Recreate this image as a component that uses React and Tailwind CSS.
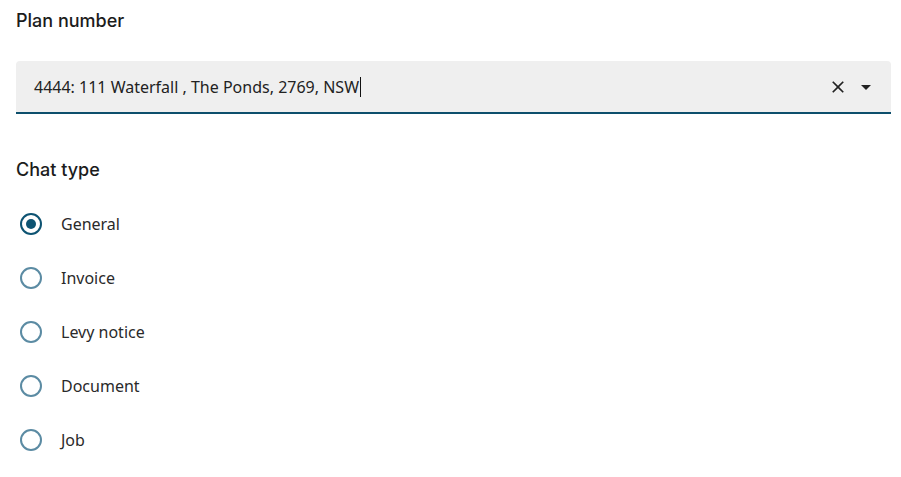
import React, { useState } from 'react';

const options = ['General', 'Invoice', 'Levy notice', 'Document', 'Job'];

const Radio = ({ checked }) => (
  <svg width="24" height="24" viewBox="0 0 24 24">
    <circle cx="12" cy="12" r="10" fill="none" stroke={checked ? '#0d5372' : '#5b8ba3'} strokeWidth="2" />
    {checked && <circle cx="12" cy="12" r="5" fill="#0d5372" />}
  </svg>
);

const App = () => {
  const [type, setType] = useState('General');

  return (
    <div className="w-[901px] h-[477px] bg-white pl-4 pr-[10px] pt-[9px] text-[#212121]" style={{ fontFamily: '"Noto Sans", sans-serif' }}>
      {/* Plan number */}
      <div className="text-[18px] font-medium leading-6 text-[#1c1c1c]" style={{ fontFamily: 'Inter, sans-serif' }}>Plan number</div>
      <div className="mt-[28px] h-[53px] bg-[#efefef] rounded-t border-b-2 border-[#0d4f6c] flex items-center pl-[18px] pr-[13px]">
        <div className="flex-1 text-[16px] text-[#222] flex items-center">
          4444: 111 Waterfall , The Ponds, 2769, NSW
          <span className="inline-block w-px h-[20px] bg-[#111] ml-px" />
        </div>
        <svg width="20" height="20" viewBox="0 0 24 24" className="mr-[6px]">
          <path d="M19 6.41 17.59 5 12 10.59 6.41 5 5 6.41 10.59 12 5 17.59 6.41 19 12 13.41 17.59 19 19 17.59 13.41 12z" fill="#222" />
        </svg>
        <svg width="24" height="24" viewBox="0 0 24 24">
          <path d="M7 10l5 5 5-5z" fill="#222" />
        </svg>
      </div>

      {/* Chat type */}
      <div className="mt-[44px] text-[18px] font-medium leading-6 text-[#1c1c1c]" style={{ fontFamily: 'Inter, sans-serif' }}>Chat type</div>
      <div className="mt-[15px] flex flex-col">
        {options.map((o) => (
          <label key={o} className="h-[54px] flex items-center cursor-pointer" onClick={() => setType(o)}>
            <span className="ml-[3px] mr-[18px] flex items-center">
              <Radio checked={type === o} />
            </span>
            <span className="text-[16px] text-[#2a2a2a]">{o}</span>
          </label>
        ))}
      </div>
    </div>
  );
};

export default App;
